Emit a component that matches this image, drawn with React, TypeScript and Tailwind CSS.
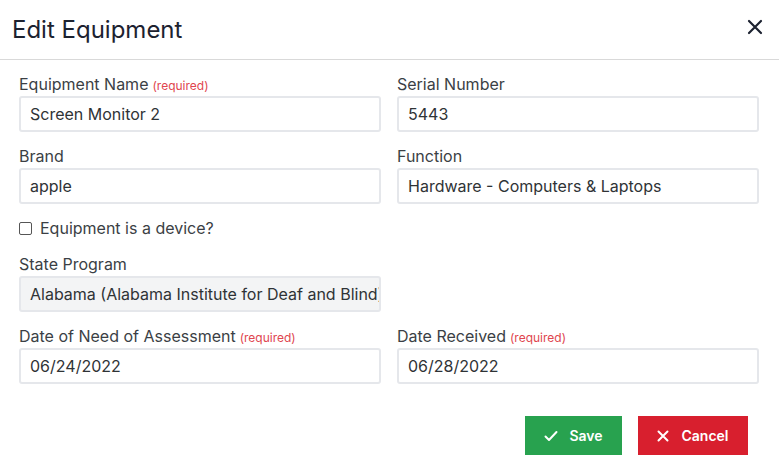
import React from "react";

const font = { fontFamily: "Inter, 'Noto Sans', sans-serif" };

function Label({ text, required }: { text: string; required?: boolean }) {
  return (
    <div className="h-[17px] flex items-center mb-[3px] text-[16px] leading-[17px] text-[#3b3f45]">
      <span>{text}</span>
      {required && <span className="ml-[4px] text-[12px] mt-[2px] text-[#e0464f]">(required)</span>}
    </div>
  );
}

function Field({ label, value, required, disabled }: { label: string; value: string; required?: boolean; disabled?: boolean }) {
  return (
    <div className="flex flex-col">
      <Label text={label} required={required} />
      <div
        className={`h-[36px] border-2 border-[#e5e7eb] rounded-[3px] px-[9px] flex items-center text-[16px] text-[#2f3336] overflow-hidden whitespace-nowrap ${disabled ? "bg-[#f3f4f5]" : "bg-white"}`}
      >
        {value}
      </div>
    </div>
  );
}

export default function App() {
  return (
    <div className="w-[779px] h-[476px] bg-white" style={font}>
      <div className="h-[60px] border-b border-[#d9d9d9] flex items-center justify-between pl-[12px] pr-[16px]">
        <h1 className="text-[24px] text-[#1c2230] font-normal">Edit Equipment</h1>
        <svg width="16" height="16" viewBox="0 0 16 16" className="mb-[6px]">
          <path d="M2 2L14 14M14 2L2 14" stroke="#1c2230" strokeWidth="2.2" strokeLinecap="round" />
        </svg>
      </div>
      <div className="px-[19px] pt-[16px]">
        <div className="grid grid-cols-2 gap-x-[16px] gap-y-[16px] w-[740px]">
          <Field label="Equipment Name" value="Screen Monitor 2" required />
          <Field label="Serial Number" value="5443" />
          <Field label="Brand" value="apple" />
          <Field label="Function" value="Hardware - Computers & Laptops" />
        </div>
        <div className="flex items-center h-[18px] mt-[15px] mb-[1px] text-[16px] text-[#3b3f45]">
          <span className="w-[13px] h-[13px] border border-[#555] rounded-[2px] mr-[8px] bg-white"></span>
          <span>Equipment is a device?</span>
        </div>
        <div className="grid grid-cols-2 gap-x-[16px] w-[740px] mt-[19px]">
          <Field label="State Program" value="Alabama (Alabama Institute for Deaf and Blind)" disabled />
        </div>
        <div className="grid grid-cols-2 gap-x-[16px] w-[740px] mt-[16px]">
          <Field label="Date of Need of Assessment" value="06/24/2022" required />
          <Field label="Date Received" value="06/28/2022" required />
        </div>
        <div className="flex justify-end gap-[16px] mt-[32px] pr-[12px]">
          <button className="w-[97px] h-[39px] bg-[#28a24f] text-white text-[14px] font-semibold flex items-center justify-center gap-[11px]">
            <svg width="14" height="12" viewBox="0 0 14 12">
              <path d="M1.5 6.5L5 10L12.5 2" stroke="white" strokeWidth="2" fill="none" strokeLinecap="round" strokeLinejoin="round" />
            </svg>
            Save
          </button>
          <button className="w-[110px] h-[39px] bg-[#d81f2e] text-white text-[14px] font-semibold flex items-center justify-center gap-[12px]">
            <svg width="12" height="12" viewBox="0 0 12 12">
              <path d="M1.5 1.5L10.5 10.5M10.5 1.5L1.5 10.5" stroke="white" strokeWidth="2" strokeLinecap="round" />
            </svg>
            Cancel
          </button>
        </div>
      </div>
    </div>
  );
}
